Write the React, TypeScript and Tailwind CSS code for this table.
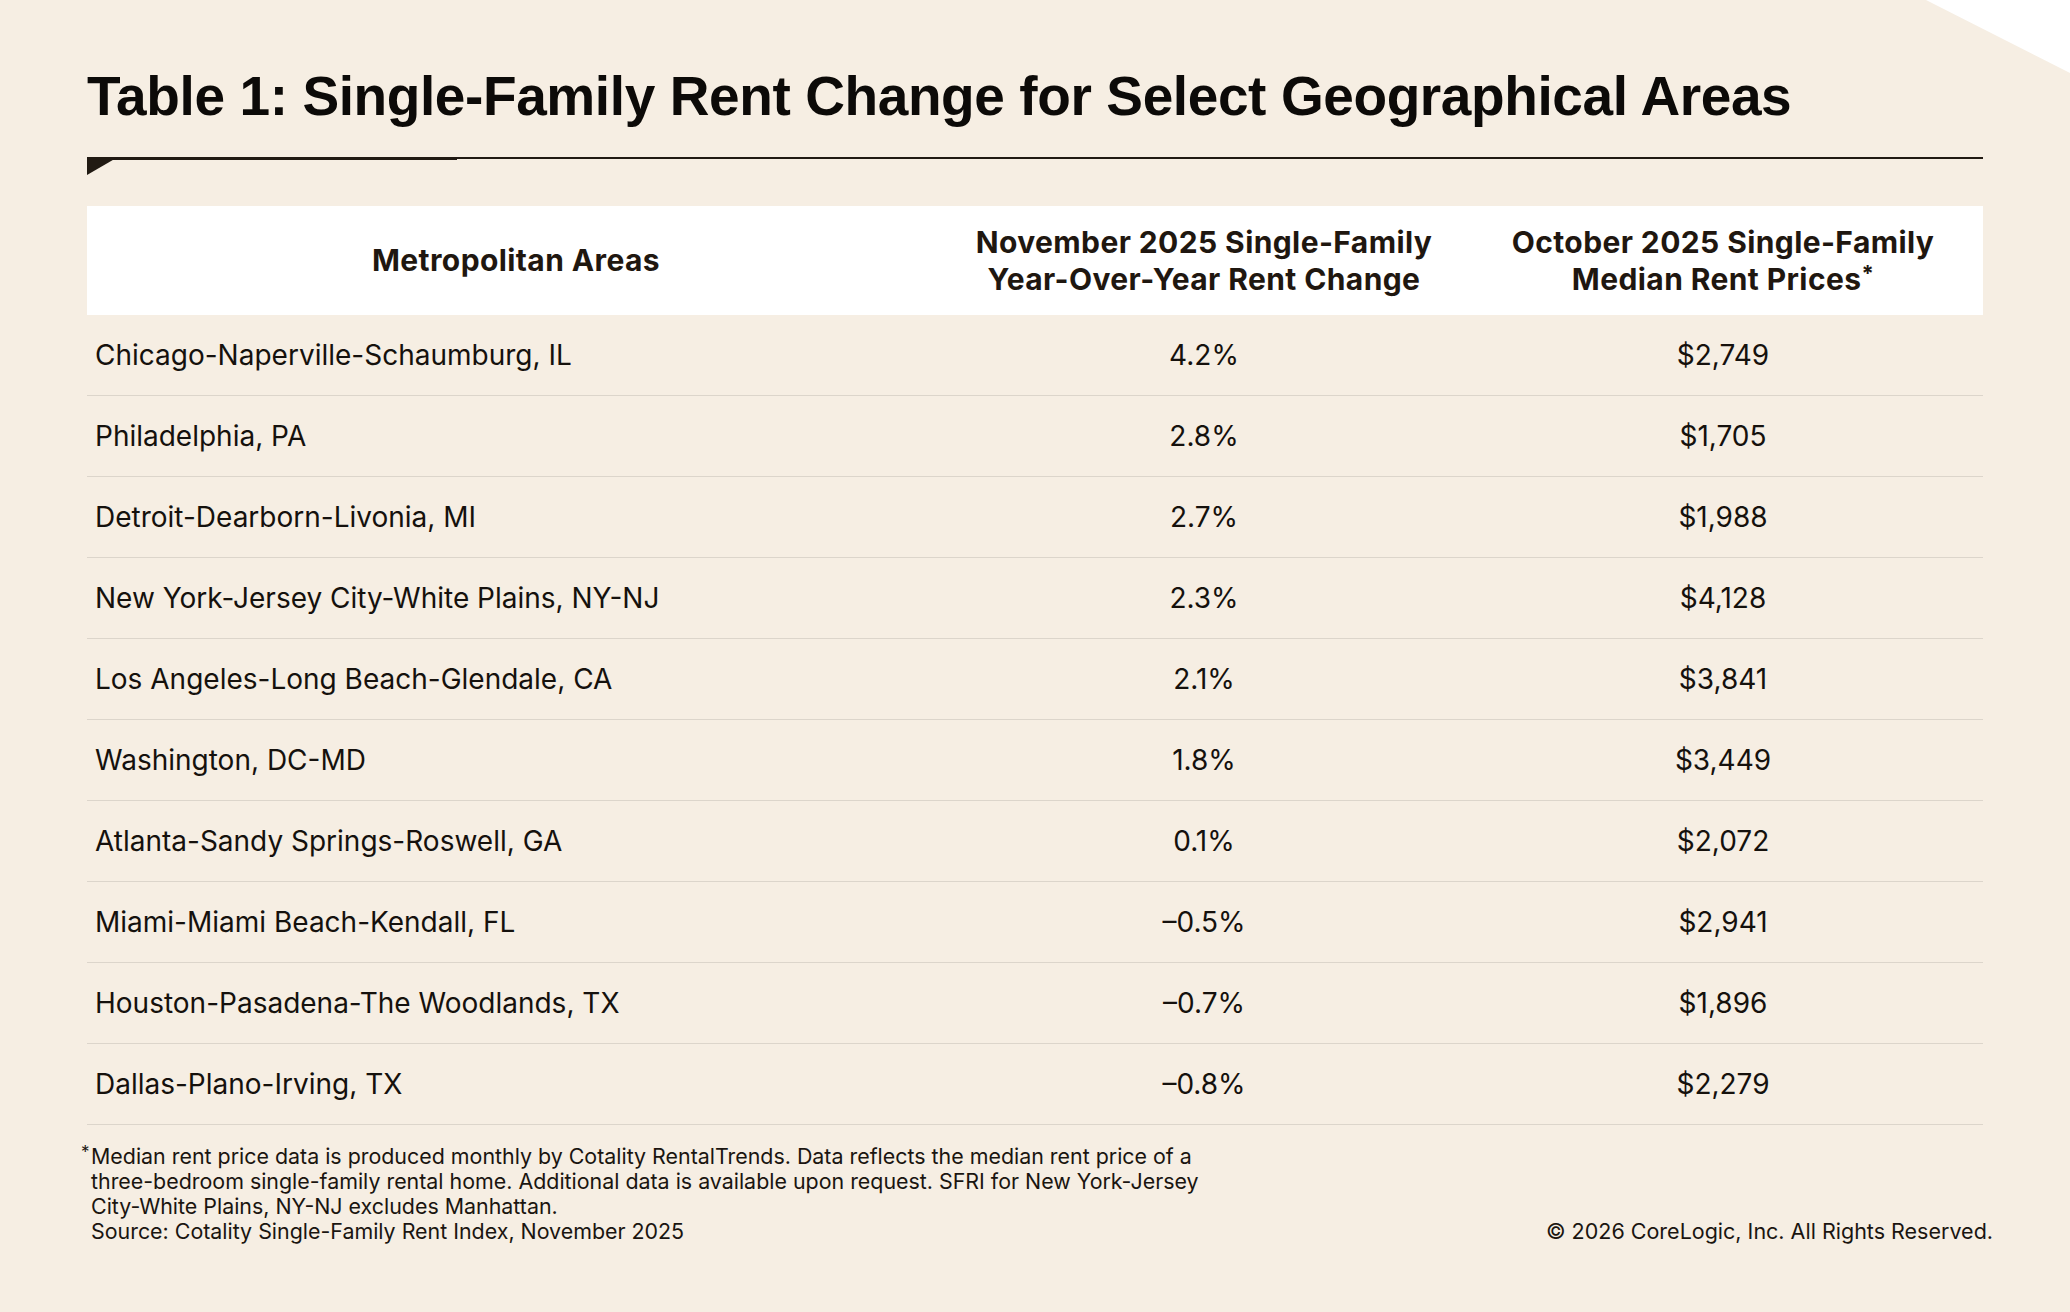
import React from "react";

const rows = [
  { area: "Chicago-Naperville-Schaumburg, IL", change: "4.2%", rent: "$2,749" },
  { area: "Philadelphia, PA", change: "2.8%", rent: "$1,705" },
  { area: "Detroit-Dearborn-Livonia, MI", change: "2.7%", rent: "$1,988" },
  { area: "New York-Jersey City-White Plains, NY-NJ", change: "2.3%", rent: "$4,128" },
  { area: "Los Angeles-Long Beach-Glendale, CA", change: "2.1%", rent: "$3,841" },
  { area: "Washington, DC-MD", change: "1.8%", rent: "$3,449" },
  { area: "Atlanta-Sandy Springs-Roswell, GA", change: "0.1%", rent: "$2,072" },
  { area: "Miami-Miami Beach-Kendall, FL", change: "–0.5%", rent: "$2,941" },
  { area: "Houston-Pasadena-The Woodlands, TX", change: "–0.7%", rent: "$1,896" },
  { area: "Dallas-Plano-Irving, TX", change: "–0.8%", rent: "$2,279" },
];

export default function App() {
  return (
    <div className="relative w-[2070px] h-[1312px] overflow-hidden bg-[#f6eee3] font-['Inter',sans-serif] text-[#15110d]">
      {/* corner cut */}
      <svg className="absolute right-0 top-0" width="144" height="74" viewBox="0 0 144 74">
        <polygon points="0,0 144,0 144,73" fill="#ffffff" />
      </svg>

      <div className="px-[87px]">
        <h1 className="pt-[69px] font-['Liberation_Sans',Arial,sans-serif] font-bold text-[55px] leading-[54px] tracking-[-0.4px] text-[#0c0a08]">
          Table 1: Single-Family Rent Change for Select Geographical Areas
        </h1>

        <div className="relative mt-[34px] h-[2px] bg-[#211a13]">
          <div className="absolute left-0 top-0 h-[3px] w-[370px] bg-[#211a13]" />
          <svg className="absolute left-0 top-0" width="31" height="18" viewBox="0 0 31 18">
            <polygon points="0,0 31,0 0,18" fill="#211a13" />
          </svg>
        </div>

        <div className="mt-[47px]">
          <div className="grid grid-cols-[858px_518px_1fr] h-[109px] bg-white items-center text-center font-bold text-[30px] leading-[37px] tracking-[0.4px] text-[#1f1710]">
            <div>Metropolitan Areas</div>
            <div>
              November 2025 Single-Family
              <br />
              Year-Over-Year Rent Change
            </div>
            <div>
              October 2025 Single-Family
              <br />
              Median Rent Prices<span className="relative top-[-9px] text-[22px] leading-none">*</span>
            </div>
          </div>

          {rows.map((r) => (
            <div
              key={r.area}
              className="grid grid-cols-[858px_518px_1fr] h-[81px] items-center border-b border-[#dcd5cb] text-[28px] leading-[36px]"
            >
              <div className="pl-2">{r.area}</div>
              <div className="text-center">{r.change}</div>
              <div className="text-center">{r.rent}</div>
            </div>
          ))}
        </div>

        <div className="mt-[19px] flex items-end justify-between text-[21.4px] leading-[25px] text-[#1a1510]">
          <div className="relative pl-[4px]">
            <span className="absolute left-[-6px] top-[-4px] text-[17px]">*</span>
            <p>Median rent price data is produced monthly by Cotality RentalTrends. Data reflects the median rent price of a</p>
            <p>three-bedroom single-family rental home. Additional data is available upon request. SFRI for New York-Jersey</p>
            <p>City-White Plains, NY-NJ excludes Manhattan.</p>
            <p>Source: Cotality Single-Family Rent Index, November 2025</p>
          </div>
          <div className="mr-[-10px] text-[21.5px] leading-[25px]">© 2026 CoreLogic, Inc. All Rights Reserved.</div>
        </div>
      </div>
    </div>
  );
}
